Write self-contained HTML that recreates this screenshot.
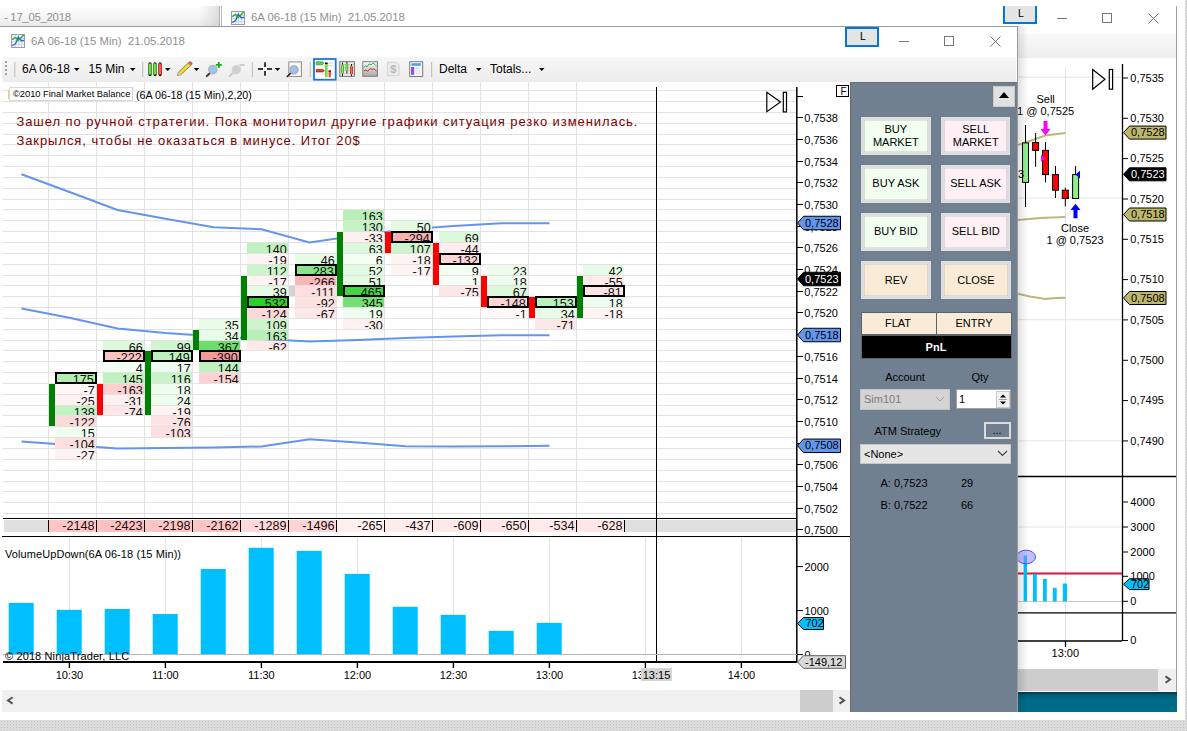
<!DOCTYPE html><html><head><meta charset="utf-8"><style>html,body{margin:0;padding:0;}body{width:1187px;height:731px;overflow:hidden;position:relative;background:#fff;font-family:"Liberation Sans", sans-serif;}div{box-sizing:border-box;}svg{position:absolute;left:0;top:0;overflow:visible;}.c{position:absolute;overflow:hidden;font-size:13px;line-height:13px;text-align:right;padding-right:2px;color:#111;box-sizing:border-box;}</style></head><body><div style="position:absolute;left:0.00px;top:720.00px;width:1187.00px;height:11.00px;background-color:#dedede;background-image:radial-gradient(#c2c2c2 0.7px,transparent 0.9px),radial-gradient(#cacaca 0.7px,transparent 0.9px);background-size:3px 3px,3px 3px;background-position:0 0,1.5px 1.5px;"></div><div style="position:absolute;left:1184.50px;top:0.00px;width:3.00px;height:731.00px;background-color:#dedede;background-image:radial-gradient(#c2c2c2 0.7px,transparent 0.9px),radial-gradient(#cacaca 0.7px,transparent 0.9px);background-size:3px 3px,3px 3px;background-position:0 0,1.5px 1.5px;"></div><div style="position:absolute;left:0.00px;top:6.00px;width:220.00px;height:21.00px;background:linear-gradient(to bottom,#ffffff 0%,#f4f4f4 60%,#e6e6e6 100%);"></div><div style="position:absolute;left:200.00px;top:6.00px;width:20.00px;height:21.00px;background:linear-gradient(to right,rgba(255,255,255,0),rgba(200,200,200,0.6));"></div><div style="position:absolute;left:219.00px;top:6.00px;width:1.00px;height:21.00px;background:#b0b0b0;"></div><div style="position:absolute;left:221.00px;top:6.00px;width:1.00px;height:21.00px;background:#b8b8b8;"></div><div style="position:absolute;left:0.00px;top:26.00px;width:1018.00px;height:1.00px;background:#a8a8a8;"></div><div style="position:absolute;left:4.00px;top:11.85px;font-size:11.4px;line-height:11.4px;color:#909090;white-space:nowrap;letter-spacing:-0.3px;">- 17_05_2018</div><svg style="left:231px;top:11px" width="14" height="14" viewBox="0 0 14 14"><rect x="0.5" y="0.5" width="13" height="13" fill="#f6f6fc" stroke="#9a9ab4"/><path d="M1 4.5H13M1 7.5H13M1 10.5H13M4.5 1V13M7.5 1V13M10.5 1V13" stroke="#d4d4e4" stroke-width="1"/><polyline points="1,11.5 3.5,10.5 5,9 6.3,5.5 7.3,3 9,5.5 10.5,6.8 12,6.3 13,6.3" fill="none" stroke="#1e64e0" stroke-width="1.3"/><polyline points="1,5.5 2.5,5 4,3.5 5,3.8 7,6.5 9,4.8 11,2.8 12.8,1" fill="none" stroke="#20b020" stroke-width="1.3"/></svg><div style="position:absolute;left:251.00px;top:11.85px;font-size:11.4px;line-height:11.4px;color:#909090;white-space:nowrap;">6A 06-18 (15 Min)&nbsp; 21.05.2018</div><div style="position:absolute;left:1003.00px;top:4.00px;width:34.00px;height:19.50px;background:#e5e5e5;border:2px solid #0078d7;"></div><div style="position:absolute;left:1021.00px;top:8.01px;font-size:10.5px;line-height:10.5px;color:#000;white-space:nowrap;transform:translateX(-50%);">L</div><div style="position:absolute;left:1057.00px;top:18.00px;width:10.00px;height:1.00px;background:#777;"></div><div style="position:absolute;left:1102.00px;top:13.00px;width:10.00px;height:10.00px;border:1px solid #777;"></div><svg style="left:1147.5px;top:13px" width="11" height="11" viewBox="0 0 11 11"><path d="M0.5 0.5L10.5 10.5M10.5 0.5L0.5 10.5" stroke="#777" stroke-width="1"/></svg><div style="position:absolute;left:1000.00px;top:0.00px;width:40.00px;height:6.00px;background:#fff;"></div><div style="position:absolute;left:1176.00px;top:6.00px;width:1.00px;height:706.00px;background:#a0a0a0;"></div><div style="position:absolute;left:1018.00px;top:34.00px;width:158.00px;height:24.00px;background:linear-gradient(to bottom,#f9f9f9,#eeeeee);"></div><div style="position:absolute;left:1018.00px;top:58.00px;width:158.00px;height:611.00px;background:#fff;"></div><div style="position:absolute;left:1018.00px;top:669.00px;width:140.00px;height:22.00px;background:#cdcdcd;"></div><div style="position:absolute;left:1158.00px;top:669.00px;width:18.00px;height:22.00px;background:#efefef;"></div><div style="position:absolute;left:1018.00px;top:691.50px;width:159.00px;height:20.50px;background:linear-gradient(to bottom,#003848 0px,#005c76 3px,#006a88 8px,#006d8b 100%);"></div><div style="position:absolute;left:0.00px;top:712.00px;width:1184.50px;height:8.00px;background:#fff;border-radius:0 0 6px 0;"></div><svg width="1187" height="731" viewBox="0 0 1187 731"><line x1="1018" y1="77.1" x2="1122" y2="77.1" stroke="#e3e3e3" stroke-width="1"/><line x1="1018" y1="198" x2="1122" y2="198" stroke="#e3e3e3" stroke-width="1"/><line x1="1018" y1="319.7" x2="1122" y2="319.7" stroke="#e3e3e3" stroke-width="1"/><line x1="1018" y1="440.9" x2="1122" y2="440.9" stroke="#e3e3e3" stroke-width="1"/><line x1="1065.5" y1="67" x2="1065.5" y2="641" stroke="#e3e3e3" stroke-width="1"/><line x1="1018" y1="527" x2="1122" y2="527" stroke="#e3e3e3" stroke-width="1"/><line x1="1018" y1="601.5" x2="1122" y2="601.5" stroke="#c8c8c8" stroke-width="1"/><line x1="1018" y1="476.5" x2="1176" y2="476.5" stroke="#000" stroke-width="1.3"/><line x1="1018" y1="612.8" x2="1176" y2="612.8" stroke="#000" stroke-width="1.3"/><line x1="1018" y1="641" x2="1122" y2="641" stroke="#000" stroke-width="1.3"/><line x1="1122.5" y1="64" x2="1122.5" y2="641" stroke="#000" stroke-width="1.3"/><line x1="1122.5" y1="78.0" x2="1128" y2="78.0" stroke="#000" stroke-width="1"/><line x1="1122.5" y1="118.3" x2="1128" y2="118.3" stroke="#000" stroke-width="1"/><line x1="1122.5" y1="158.6" x2="1128" y2="158.6" stroke="#000" stroke-width="1"/><line x1="1122.5" y1="199.0" x2="1128" y2="199.0" stroke="#000" stroke-width="1"/><line x1="1122.5" y1="239.3" x2="1128" y2="239.3" stroke="#000" stroke-width="1"/><line x1="1122.5" y1="279.6" x2="1128" y2="279.6" stroke="#000" stroke-width="1"/><line x1="1122.5" y1="319.9" x2="1128" y2="319.9" stroke="#000" stroke-width="1"/><line x1="1122.5" y1="360.3" x2="1128" y2="360.3" stroke="#000" stroke-width="1"/><line x1="1122.5" y1="400.6" x2="1128" y2="400.6" stroke="#000" stroke-width="1"/><line x1="1122.5" y1="440.9" x2="1128" y2="440.9" stroke="#000" stroke-width="1"/><line x1="1122.5" y1="502" x2="1128" y2="502" stroke="#000" stroke-width="1"/><line x1="1122.5" y1="527" x2="1128" y2="527" stroke="#000" stroke-width="1"/><line x1="1122.5" y1="552" x2="1128" y2="552" stroke="#000" stroke-width="1"/><line x1="1122.5" y1="576.3" x2="1128" y2="576.3" stroke="#000" stroke-width="1"/><line x1="1122.5" y1="601.3" x2="1128" y2="601.3" stroke="#000" stroke-width="1"/><line x1="1122.5" y1="640.5" x2="1128" y2="640.5" stroke="#000" stroke-width="1"/><line x1="1065.5" y1="641" x2="1065.5" y2="647" stroke="#000" stroke-width="1.3"/><polyline points="1018,145 1030,141 1045,135.6 1065.4,133" fill="none" stroke="#bdb77a" stroke-width="2"/><polyline points="1018,220 1040,218 1065.4,217" fill="none" stroke="#bdb77a" stroke-width="2"/><polyline points="1018,293.7 1030,296.5 1045.6,299 1055,298 1065.4,297.8" fill="none" stroke="#bdb77a" stroke-width="2"/><line x1="1025.5" y1="125" x2="1025.5" y2="207" stroke="#000" stroke-width="1"/><rect x="1022.5" y="142.9" width="6" height="39.5" fill="#90ee90" stroke="#000" stroke-width="1"/><line x1="1035.6" y1="133" x2="1035.6" y2="166.8" stroke="#000" stroke-width="1"/><rect x="1032.6" y="142.6" width="6" height="7.800000000000011" fill="#ff0000" stroke="#000" stroke-width="1"/><line x1="1045.5" y1="142" x2="1045.5" y2="182.4" stroke="#000" stroke-width="1"/><rect x="1042.5" y="150.4" width="6" height="24.19999999999999" fill="#ff0000" stroke="#000" stroke-width="1"/><line x1="1055.5" y1="166" x2="1055.5" y2="198" stroke="#000" stroke-width="1"/><rect x="1052.5" y="174.6" width="6" height="15.599999999999994" fill="#ff0000" stroke="#000" stroke-width="1"/><line x1="1065.3" y1="187.6" x2="1065.3" y2="206.3" stroke="#000" stroke-width="1"/><rect x="1062.3" y="190.2" width="6" height="8.300000000000011" fill="#ff0000" stroke="#000" stroke-width="1"/><line x1="1075.6" y1="166" x2="1075.6" y2="198.5" stroke="#000" stroke-width="1"/><rect x="1072.6" y="174.6" width="6" height="23.900000000000006" fill="#90ee90" stroke="#000" stroke-width="1"/><path d="M1043.5 121H1047.5V129H1050.5L1045.5 135.5L1040.5 129H1043.5Z" fill="#ff00ff"/><path d="M1041 155L1046 158.3L1041 161.6Z" fill="#ff00ff"/><path d="M1073.5 218.3H1077.5V210H1080.5L1075.5 203.7L1070.5 210H1073.5Z" fill="#0000ff"/><path d="M1080 170.7L1075.5 174.6L1080 178.5Z" fill="#0000ff"/><path d="M1092.7 69.5L1105 79.3L1092.7 89.2Z" fill="none" stroke="#000" stroke-width="1.2"/><rect x="1109.3" y="69.5" width="3.3" height="19.7" fill="none" stroke="#000" stroke-width="1.2"/><line x1="1018" y1="573.5" x2="1122" y2="573.5" stroke="#dc143c" stroke-width="2"/><rect x="1023.6" y="555.6" width="3.3999999999999773" height="45.69999999999993" fill="#00bfff"/><rect x="1033" y="574" width="3.7999999999999545" height="27.299999999999955" fill="#00bfff"/><rect x="1043" y="578.8" width="3.7999999999999545" height="22.5" fill="#00bfff"/><rect x="1052.8" y="587.8" width="3.900000000000091" height="13.5" fill="#00bfff"/><rect x="1062.8" y="583.5" width="4.2000000000000455" height="17.799999999999955" fill="#00bfff"/><ellipse cx="1026" cy="557" rx="9.5" ry="6.8" fill="rgba(140,140,255,0.55)" stroke="#5050ff" stroke-width="1"/><path d="M1123.5 132.6L1129.5 126.1H1166.0V139.1H1129.5Z" fill="#bdb76b" stroke="#000" stroke-width="1"/><path d="M1123.5 174.3L1129.5 167.8H1166.0V180.8H1129.5Z" fill="#000" stroke="#000" stroke-width="1"/><path d="M1123.5 214.5L1129.5 208.0H1166.0V221.0H1129.5Z" fill="#bdb76b" stroke="#000" stroke-width="1"/><path d="M1123.5 298L1129.5 291.5H1166.0V304.5H1129.5Z" fill="#bdb76b" stroke="#000" stroke-width="1"/><path d="M1123.5 584.2L1129.5 578.8000000000001H1149.0V589.6H1129.5Z" fill="#00bfff" stroke="#000" stroke-width="1"/></svg><div style="position:absolute;left:1130.30px;top:72.69px;font-size:11px;line-height:11px;color:#000;white-space:nowrap;">0,7535</div><div style="position:absolute;left:1130.30px;top:113.01px;font-size:11px;line-height:11px;color:#000;white-space:nowrap;">0,7530</div><div style="position:absolute;left:1130.30px;top:153.34px;font-size:11px;line-height:11px;color:#000;white-space:nowrap;">0,7525</div><div style="position:absolute;left:1130.30px;top:193.66px;font-size:11px;line-height:11px;color:#000;white-space:nowrap;">0,7520</div><div style="position:absolute;left:1130.30px;top:233.99px;font-size:11px;line-height:11px;color:#000;white-space:nowrap;">0,7515</div><div style="position:absolute;left:1130.30px;top:274.31px;font-size:11px;line-height:11px;color:#000;white-space:nowrap;">0,7510</div><div style="position:absolute;left:1130.30px;top:314.64px;font-size:11px;line-height:11px;color:#000;white-space:nowrap;">0,7505</div><div style="position:absolute;left:1130.30px;top:354.96px;font-size:11px;line-height:11px;color:#000;white-space:nowrap;">0,7500</div><div style="position:absolute;left:1130.30px;top:395.29px;font-size:11px;line-height:11px;color:#000;white-space:nowrap;">0,7495</div><div style="position:absolute;left:1130.30px;top:435.61px;font-size:11px;line-height:11px;color:#000;white-space:nowrap;">0,7490</div><div style="position:absolute;left:1130.30px;top:496.69px;font-size:11px;line-height:11px;color:#000;white-space:nowrap;">4000</div><div style="position:absolute;left:1130.30px;top:521.69px;font-size:11px;line-height:11px;color:#000;white-space:nowrap;">3000</div><div style="position:absolute;left:1130.30px;top:546.69px;font-size:11px;line-height:11px;color:#000;white-space:nowrap;">2000</div><div style="position:absolute;left:1130.30px;top:570.99px;font-size:11px;line-height:11px;color:#000;white-space:nowrap;">1000</div><div style="position:absolute;left:1130.30px;top:595.99px;font-size:11px;line-height:11px;color:#000;white-space:nowrap;">0</div><div style="position:absolute;left:1130.30px;top:635.19px;font-size:11px;line-height:11px;color:#000;white-space:nowrap;">0</div><div style="position:absolute;left:1131.00px;top:127.29px;font-size:11px;line-height:11px;color:#000;white-space:nowrap;">0,7528</div><div style="position:absolute;left:1131.00px;top:168.99px;font-size:11px;line-height:11px;color:#fff;white-space:nowrap;">0,7523</div><div style="position:absolute;left:1131.00px;top:209.19px;font-size:11px;line-height:11px;color:#000;white-space:nowrap;">0,7518</div><div style="position:absolute;left:1131.00px;top:292.69px;font-size:11px;line-height:11px;color:#000;white-space:nowrap;">0,7508</div><div style="position:absolute;left:1131.00px;top:578.89px;font-size:11px;line-height:11px;color:#000;white-space:nowrap;">702</div><div style="position:absolute;left:1065.30px;top:648.19px;font-size:11px;line-height:11px;color:#000;white-space:nowrap;transform:translateX(-50%);">13:00</div><div style="position:absolute;left:1045.60px;top:93.69px;font-size:11px;line-height:11px;color:#000;white-space:nowrap;transform:translateX(-50%);">Sell</div><div style="position:absolute;left:1045.60px;top:105.69px;font-size:11px;line-height:11px;color:#000;white-space:nowrap;transform:translateX(-50%);">1 @ 0,7525</div><div style="position:absolute;left:1075.00px;top:222.69px;font-size:11px;line-height:11px;color:#000;white-space:nowrap;transform:translateX(-50%);">Close</div><div style="position:absolute;left:1075.00px;top:234.69px;font-size:11px;line-height:11px;color:#000;white-space:nowrap;transform:translateX(-50%);">1 @ 0,7523</div><div style="position:absolute;left:1018.00px;top:169.19px;font-size:11px;line-height:11px;color:#000;white-space:nowrap;">3</div><div style="position:absolute;left:1018.00px;top:26.00px;width:10.00px;height:686.00px;background:linear-gradient(to right,rgba(0,0,0,0.12),rgba(0,0,0,0));"></div><div style="position:absolute;left:0.00px;top:26.00px;width:1018.00px;height:686.00px;background:#fff;"></div><div style="position:absolute;left:0.00px;top:26.00px;width:1018.00px;height:1.00px;background:#9a9a9a;"></div><div style="position:absolute;left:1017.00px;top:26.00px;width:1.00px;height:686.00px;background:#9a9a9a;"></div><svg style="left:11px;top:34px" width="14" height="14" viewBox="0 0 14 14"><rect x="0.5" y="0.5" width="13" height="13" fill="#f6f6fc" stroke="#9a9ab4"/><path d="M1 4.5H13M1 7.5H13M1 10.5H13M4.5 1V13M7.5 1V13M10.5 1V13" stroke="#d4d4e4" stroke-width="1"/><polyline points="1,11.5 3.5,10.5 5,9 6.3,5.5 7.3,3 9,5.5 10.5,6.8 12,6.3 13,6.3" fill="none" stroke="#1e64e0" stroke-width="1.3"/><polyline points="1,5.5 2.5,5 4,3.5 5,3.8 7,6.5 9,4.8 11,2.8 12.8,1" fill="none" stroke="#20b020" stroke-width="1.3"/></svg><div style="position:absolute;left:31.00px;top:35.85px;font-size:11.4px;line-height:11.4px;color:#909090;white-space:nowrap;">6A 06-18 (15 Min)&nbsp; 21.05.2018</div><div style="position:absolute;left:845.00px;top:27.40px;width:34.00px;height:19.50px;background:#e5e5e5;border:2px solid #0078d7;"></div><div style="position:absolute;left:863.00px;top:31.41px;font-size:10.5px;line-height:10.5px;color:#000;white-space:nowrap;transform:translateX(-50%);">L</div><div style="position:absolute;left:899.00px;top:41.00px;width:10.00px;height:1.00px;background:#777;"></div><div style="position:absolute;left:944.00px;top:36.00px;width:10.00px;height:10.00px;border:1px solid #777;"></div><svg style="left:990px;top:36px" width="11" height="11" viewBox="0 0 11 11"><path d="M0.5 0.5L10.5 10.5M10.5 0.5L0.5 10.5" stroke="#777" stroke-width="1"/></svg><div style="position:absolute;left:2.00px;top:56.50px;width:1014.00px;height:25.50px;background:linear-gradient(to bottom,#f7f7f7,#ececec);border-radius:4px 0 0 4px;"></div><svg width="1187" height="731" viewBox="0 0 1187 731"><rect x="5" y="61" width="2" height="2" fill="#a0a0a0"/><rect x="5" y="65" width="2" height="2" fill="#a0a0a0"/><rect x="5" y="69" width="2" height="2" fill="#a0a0a0"/><rect x="5" y="73.1" width="2" height="2" fill="#a0a0a0"/><line x1="14.8" y1="62" x2="14.8" y2="77" stroke="#c4c4c4" stroke-width="1.2"/><line x1="142.7" y1="62" x2="142.7" y2="77" stroke="#c4c4c4" stroke-width="1.2"/><line x1="252.4" y1="62" x2="252.4" y2="77" stroke="#c4c4c4" stroke-width="1.2"/><line x1="310.3" y1="62" x2="310.3" y2="77" stroke="#c4c4c4" stroke-width="1.2"/><line x1="431.6" y1="62" x2="431.6" y2="77" stroke="#c4c4c4" stroke-width="1.2"/><path d="M74 68H79.5L76.75 71Z" fill="#000"/><path d="M130 68H135.5L132.75 71Z" fill="#000"/><path d="M165 68H170.5L167.75 71Z" fill="#000"/><path d="M193.8 68H199.3L196.55 71Z" fill="#000"/><path d="M274.7 68H280.2L277.45 71Z" fill="#000"/><path d="M476 68H481.5L478.75 71Z" fill="#000"/><path d="M539 68H544.5L541.75 71Z" fill="#000"/><defs><linearGradient id="gG" x1="0" x2="1"><stop offset="0" stop-color="#2a9a10"/><stop offset="0.45" stop-color="#8cf060"/><stop offset="1" stop-color="#30a018"/></linearGradient><linearGradient id="gR" x1="0" x2="1"><stop offset="0" stop-color="#c01010"/><stop offset="0.45" stop-color="#ff7a6a"/><stop offset="1" stop-color="#c82010"/></linearGradient><linearGradient id="gL" x1="0" x2="0" y1="0" y2="1"><stop offset="0" stop-color="#fafafa"/><stop offset="1" stop-color="#a8a8a8"/></linearGradient></defs><rect x="148.4" y="62.2" width="3.2" height="14" rx="1.6" fill="#111"/><rect x="148.2" y="63.6" width="3.6" height="11" rx="1.2" fill="url(#gG)"/><rect x="153.4" y="62.2" width="3.2" height="14" rx="1.6" fill="#111"/><rect x="153.2" y="63.6" width="3.6" height="11" rx="1.2" fill="url(#gG)"/><rect x="158.5" y="62.2" width="3.2" height="14" rx="1.6" fill="#111"/><rect x="158.29999999999998" y="63.6" width="3.6" height="11" rx="1.2" fill="url(#gR)"/><path d="M177.2 75.6L178.3 72.3L188.3 62.9L190.9 65.4L180.8 74.7Z" fill="#f8d820" stroke="#707070" stroke-width="0.8"/><path d="M188.3 62.9L189.4 61.9Q190.4 61.2 191.3 62L191.9 62.6Q192.5 63.5 191.9 64.3L190.9 65.4Z" fill="#f05050" stroke="#808080" stroke-width="0.6"/><path d="M177.2 75.6L178.3 72.3L180.8 74.7Z" fill="#d8c0a0"/><line x1="206.8" y1="76.2" x2="210" y2="73" stroke="#303030" stroke-width="1.8" stroke-linecap="round"/><circle cx="212.8" cy="69.6" r="4.1" fill="#9cc4ec" stroke="#b4b4b4" stroke-width="1.4"/><path d="M215.8 64.9H221.8M218.8 61.9V67.9" stroke="#10b010" stroke-width="1.8"/><line x1="229.6" y1="76.2" x2="232.8" y2="73" stroke="#c8c8c8" stroke-width="1.8" stroke-linecap="round"/><circle cx="236.4" cy="69.6" r="4.3" fill="#cfcfcf" stroke="#d8d8d8" stroke-width="1"/><path d="M239.5 65H244.8" stroke="#c4c4c4" stroke-width="1.6"/><path d="M258 69H263M267 69H272M265 62.2V67.1M265 71V75.8" stroke="#000" stroke-width="1.5"/><rect x="288.8" y="61.9" width="12.6" height="14.5" fill="#f8f8f8" stroke="#8c8c8c" stroke-width="1"/><line x1="287.3" y1="76.5" x2="290.5" y2="73.3" stroke="#202020" stroke-width="1.6" stroke-linecap="round"/><circle cx="294" cy="69.8" r="4" fill="#9cc4ec" stroke="#a8a8a8" stroke-width="1.3"/><rect x="314" y="59" width="21.7" height="20.7" fill="#ffffff" stroke="#1e78d6" stroke-width="1.8"/><path d="M326 63.2H333M324 65.8H333M322 74H333" stroke="#d0d0d0" stroke-width="0.9"/><path d="M316.2 61.8H322.5L324.2 63.3L322.5 64.8H316.2Z" fill="#58d838" stroke="#2a7a1a" stroke-width="0.6"/><path d="M316.2 69.4H322.8L324.5 70.7L322.8 72H316.2Z" fill="#e83828" stroke="#8a1a10" stroke-width="0.6"/><rect x="325" y="63.2" width="2.6" height="14" fill="#68e048"/><rect x="325" y="62.5" width="2.6" height="1.6" fill="#111"/><rect x="328.6" y="71" width="2.3" height="6.2" fill="#f04838"/><rect x="328.6" y="70.3" width="2.3" height="1.4" fill="#111"/><rect x="339.8" y="61.7" width="14.6" height="14.6" fill="#f0f0f0" stroke="#707070" stroke-width="1"/><path d="M340 64.5H354M340 67.5H354M340 70.5H354M340 73.5H354" stroke="#b8b8b8" stroke-width="0.6"/><path d="M342.5 62.5V76M346.9 62V73.5M351.5 64V76" stroke="#111" stroke-width="1"/><rect x="341.1" y="64.5" width="2.9" height="9" rx="1" fill="url(#gG)"/><rect x="345.5" y="63.5" width="2.8" height="7.5" rx="1" fill="url(#gG)"/><rect x="350" y="66" width="3" height="8.5" rx="1" fill="url(#gR)"/><rect x="362.8" y="61.7" width="14.6" height="14.6" fill="url(#gL)" stroke="#7c7c7c" stroke-width="1"/><polyline points="364,67.5 365.5,65.5 367,67 369,63.8 371,64.8 373,63 375,64.5 376.5,66" fill="none" stroke="#20b040" stroke-width="0.9"/><polyline points="364,71 366,70 368,71.3 370,68.5 372,69.5 374,68.8 376.5,71" fill="none" stroke="#e02020" stroke-width="0.9"/><path d="M387.6 62.2H396.5L399 64.7V75.6H387.6Z" fill="#ececec" stroke="#d0d0d0" stroke-width="0.9"/><rect x="409.7" y="61.7" width="13" height="14.8" fill="#f6f8fc" stroke="#7a7a7a" stroke-width="1"/><rect x="411.3" y="63.2" width="9.6" height="2.6" fill="#5aa0e0"/><rect x="411.3" y="67.3" width="2.6" height="7.2" fill="#a050f0" stroke="#6a3090" stroke-width="0.5"/><path d="M415.5 68.3H421M415.5 70.8H421M415.5 73.3H421" stroke="#c8d0e0" stroke-width="1" stroke-dasharray="2 0.8"/></svg><div style="position:absolute;left:393.20px;top:64.19px;font-size:11px;line-height:11px;color:#b8b8b8;white-space:nowrap;transform:translateX(-50%);font-weight:bold;">$</div><div style="position:absolute;left:22.00px;top:62.84px;font-size:12px;line-height:12px;color:#000;white-space:nowrap;">6A 06-18</div><div style="position:absolute;left:88.50px;top:62.84px;font-size:12px;line-height:12px;color:#000;white-space:nowrap;">15 Min</div><div style="position:absolute;left:439.00px;top:62.84px;font-size:12px;line-height:12px;color:#000;white-space:nowrap;">Delta</div><div style="position:absolute;left:490.00px;top:62.84px;font-size:12px;line-height:12px;color:#000;white-space:nowrap;">Totals...</div><svg width="1187" height="731" viewBox="0 0 1187 731"><line x1="3" y1="90.50" x2="796.5" y2="90.50" stroke="#e2e2e2" stroke-width="1"/><line x1="3" y1="101.50" x2="796.5" y2="101.50" stroke="#e2e2e2" stroke-width="1"/><line x1="3" y1="112.50" x2="796.5" y2="112.50" stroke="#e2e2e2" stroke-width="1"/><line x1="3" y1="123.50" x2="796.5" y2="123.50" stroke="#e2e2e2" stroke-width="1"/><line x1="3" y1="134.50" x2="796.5" y2="134.50" stroke="#e2e2e2" stroke-width="1"/><line x1="3" y1="144.50" x2="796.5" y2="144.50" stroke="#e2e2e2" stroke-width="1"/><line x1="3" y1="155.50" x2="796.5" y2="155.50" stroke="#e2e2e2" stroke-width="1"/><line x1="3" y1="166.50" x2="796.5" y2="166.50" stroke="#e2e2e2" stroke-width="1"/><line x1="3" y1="177.50" x2="796.5" y2="177.50" stroke="#e2e2e2" stroke-width="1"/><line x1="3" y1="188.50" x2="796.5" y2="188.50" stroke="#e2e2e2" stroke-width="1"/><line x1="3" y1="199.50" x2="796.5" y2="199.50" stroke="#e2e2e2" stroke-width="1"/><line x1="3" y1="209.50" x2="796.5" y2="209.50" stroke="#e2e2e2" stroke-width="1"/><line x1="3" y1="220.50" x2="796.5" y2="220.50" stroke="#e2e2e2" stroke-width="1"/><line x1="3" y1="231.50" x2="796.5" y2="231.50" stroke="#e2e2e2" stroke-width="1"/><line x1="3" y1="242.50" x2="796.5" y2="242.50" stroke="#e2e2e2" stroke-width="1"/><line x1="3" y1="253.50" x2="796.5" y2="253.50" stroke="#e2e2e2" stroke-width="1"/><line x1="3" y1="264.50" x2="796.5" y2="264.50" stroke="#e2e2e2" stroke-width="1"/><line x1="3" y1="275.50" x2="796.5" y2="275.50" stroke="#e2e2e2" stroke-width="1"/><line x1="3" y1="285.50" x2="796.5" y2="285.50" stroke="#e2e2e2" stroke-width="1"/><line x1="3" y1="296.50" x2="796.5" y2="296.50" stroke="#e2e2e2" stroke-width="1"/><line x1="3" y1="307.50" x2="796.5" y2="307.50" stroke="#e2e2e2" stroke-width="1"/><line x1="3" y1="318.50" x2="796.5" y2="318.50" stroke="#e2e2e2" stroke-width="1"/><line x1="3" y1="329.50" x2="796.5" y2="329.50" stroke="#e2e2e2" stroke-width="1"/><line x1="3" y1="340.50" x2="796.5" y2="340.50" stroke="#e2e2e2" stroke-width="1"/><line x1="3" y1="350.50" x2="796.5" y2="350.50" stroke="#e2e2e2" stroke-width="1"/><line x1="3" y1="361.50" x2="796.5" y2="361.50" stroke="#e2e2e2" stroke-width="1"/><line x1="3" y1="372.50" x2="796.5" y2="372.50" stroke="#e2e2e2" stroke-width="1"/><line x1="3" y1="383.50" x2="796.5" y2="383.50" stroke="#e2e2e2" stroke-width="1"/><line x1="3" y1="394.50" x2="796.5" y2="394.50" stroke="#e2e2e2" stroke-width="1"/><line x1="3" y1="405.50" x2="796.5" y2="405.50" stroke="#e2e2e2" stroke-width="1"/><line x1="3" y1="415.50" x2="796.5" y2="415.50" stroke="#e2e2e2" stroke-width="1"/><line x1="3" y1="426.50" x2="796.5" y2="426.50" stroke="#e2e2e2" stroke-width="1"/><line x1="3" y1="437.50" x2="796.5" y2="437.50" stroke="#e2e2e2" stroke-width="1"/><line x1="3" y1="448.50" x2="796.5" y2="448.50" stroke="#e2e2e2" stroke-width="1"/><line x1="3" y1="459.50" x2="796.5" y2="459.50" stroke="#e2e2e2" stroke-width="1"/><line x1="3" y1="470.50" x2="796.5" y2="470.50" stroke="#e2e2e2" stroke-width="1"/><line x1="3" y1="481.50" x2="796.5" y2="481.50" stroke="#e2e2e2" stroke-width="1"/><line x1="3" y1="491.50" x2="796.5" y2="491.50" stroke="#e2e2e2" stroke-width="1"/><line x1="3" y1="502.50" x2="796.5" y2="502.50" stroke="#e2e2e2" stroke-width="1"/><line x1="3" y1="513.50" x2="796.5" y2="513.50" stroke="#e2e2e2" stroke-width="1"/><line x1="48.5" y1="82" x2="48.5" y2="518.5" stroke="#e2e2e2" stroke-width="1"/><line x1="96.5" y1="82" x2="96.5" y2="518.5" stroke="#e2e2e2" stroke-width="1"/><line x1="144.5" y1="82" x2="144.5" y2="518.5" stroke="#e2e2e2" stroke-width="1"/><line x1="192.5" y1="82" x2="192.5" y2="518.5" stroke="#e2e2e2" stroke-width="1"/><line x1="240.5" y1="82" x2="240.5" y2="518.5" stroke="#e2e2e2" stroke-width="1"/><line x1="288.5" y1="82" x2="288.5" y2="518.5" stroke="#e2e2e2" stroke-width="1"/><line x1="336.5" y1="82" x2="336.5" y2="518.5" stroke="#e2e2e2" stroke-width="1"/><line x1="384.5" y1="82" x2="384.5" y2="518.5" stroke="#e2e2e2" stroke-width="1"/><line x1="432.5" y1="82" x2="432.5" y2="518.5" stroke="#e2e2e2" stroke-width="1"/><line x1="480.5" y1="82" x2="480.5" y2="518.5" stroke="#e2e2e2" stroke-width="1"/><line x1="528.5" y1="82" x2="528.5" y2="518.5" stroke="#e2e2e2" stroke-width="1"/><line x1="576.5" y1="82" x2="576.5" y2="518.5" stroke="#e2e2e2" stroke-width="1"/><line x1="69.5" y1="537" x2="69.5" y2="654" stroke="#e2e2e2" stroke-width="1"/><line x1="165.5" y1="537" x2="165.5" y2="654" stroke="#e2e2e2" stroke-width="1"/><line x1="261.5" y1="537" x2="261.5" y2="654" stroke="#e2e2e2" stroke-width="1"/><line x1="357.5" y1="537" x2="357.5" y2="654" stroke="#e2e2e2" stroke-width="1"/><line x1="453.5" y1="537" x2="453.5" y2="654" stroke="#e2e2e2" stroke-width="1"/><line x1="549.5" y1="537" x2="549.5" y2="654" stroke="#e2e2e2" stroke-width="1"/><line x1="645.5" y1="537" x2="645.5" y2="654" stroke="#e2e2e2" stroke-width="1"/><line x1="741.5" y1="537" x2="741.5" y2="654" stroke="#e2e2e2" stroke-width="1"/><polyline points="21.5,174.2 69.5,192 117.5,210 165.5,218.7 213.5,227.3 261.5,229.3 309.5,242.5 357.5,235.5 405.5,229.5 453.5,226 501.5,223.3 549.5,223.3" fill="none" stroke="#6495ed" stroke-width="2"/><polyline points="21.5,308.6 69.5,317.7 117.5,328.5 165.5,333 213.5,336.3 261.5,339 309.5,341.5 357.5,340 405.5,338 453.5,336.5 501.5,335.2 549.5,335.2" fill="none" stroke="#6495ed" stroke-width="2"/><polyline points="21.5,441.5 69.5,445 117.5,448.5 165.5,448 213.5,447.5 261.5,446.5 309.5,439.2 357.5,442.5 405.5,446.3 453.5,446.5 501.5,446.3 549.5,445.8" fill="none" stroke="#6495ed" stroke-width="2"/></svg><div class="c" style="left:55.0px;top:373px;width:41px;height:10px;background:rgb(179,239,179);padding-top:0.6px;padding-right:2.3px;line-height:12px;font-size:12.6px">175</div><div class="c" style="left:55.0px;top:384px;width:41px;height:10px;background:rgb(255,246,246);padding-top:0.6px;padding-right:1.3px;line-height:12px;font-size:12.6px">-7</div><div class="c" style="left:55.0px;top:395px;width:41px;height:10px;background:rgb(254,242,242);padding-top:0.6px;padding-right:1.3px;line-height:12px;font-size:12.6px">-25</div><div class="c" style="left:55.0px;top:406px;width:41px;height:9px;background:rgb(193,242,193);padding-top:0.6px;padding-right:1.3px;line-height:12px;font-size:12.6px">138</div><div class="c" style="left:55.0px;top:416px;width:41px;height:10px;background:rgb(252,218,218);padding-top:0.6px;padding-right:1.3px;line-height:12px;font-size:12.6px">-122</div><div class="c" style="left:55.0px;top:427px;width:41px;height:10px;background:rgb(239,254,239);padding-top:0.6px;padding-right:1.3px;line-height:12px;font-size:12.6px">15</div><div class="c" style="left:55.0px;top:438px;width:41px;height:10px;background:rgb(253,222,222);padding-top:0.6px;padding-right:1.3px;line-height:12px;font-size:12.6px">-104</div><div class="c" style="left:55.0px;top:449px;width:41px;height:10px;background:rgb(254,241,241);padding-top:0.6px;padding-right:1.3px;line-height:12px;font-size:12.6px">-27</div><div style="position:absolute;left:49.00px;top:384.00px;width:6.00px;height:42.00px;background:#008000;"></div><div class="c" style="left:103.0px;top:341px;width:41px;height:9px;background:rgb(220,249,220);padding-top:0.6px;padding-right:1.3px;line-height:12px;font-size:12.6px">66</div><div class="c" style="left:103.0px;top:351px;width:41px;height:10px;background:rgb(250,193,193);padding-top:0.6px;padding-right:2.3px;line-height:12px;font-size:12.6px">-222</div><div class="c" style="left:103.0px;top:362px;width:41px;height:10px;background:rgb(243,255,243);padding-top:0.6px;padding-right:1.3px;line-height:12px;font-size:12.6px">4</div><div class="c" style="left:103.0px;top:373px;width:41px;height:10px;background:rgb(190,242,190);padding-top:0.6px;padding-right:1.3px;line-height:12px;font-size:12.6px">145</div><div class="c" style="left:103.0px;top:384px;width:41px;height:10px;background:rgb(252,208,208);padding-top:0.6px;padding-right:1.3px;line-height:12px;font-size:12.6px">-163</div><div class="c" style="left:103.0px;top:395px;width:41px;height:10px;background:rgb(254,240,240);padding-top:0.6px;padding-right:1.3px;line-height:12px;font-size:12.6px">-31</div><div class="c" style="left:103.0px;top:406px;width:41px;height:9px;background:rgb(253,230,230);padding-top:0.6px;padding-right:1.3px;line-height:12px;font-size:12.6px">-74</div><div style="position:absolute;left:97.00px;top:384.00px;width:6.00px;height:31.00px;background:#ff0000;"></div><div class="c" style="left:151.0px;top:341px;width:41px;height:9px;background:rgb(208,246,208);padding-top:0.6px;padding-right:1.3px;line-height:12px;font-size:12.6px">99</div><div class="c" style="left:151.0px;top:351px;width:41px;height:10px;background:rgb(189,241,189);padding-top:0.6px;padding-right:2.3px;line-height:12px;font-size:12.6px">149</div><div class="c" style="left:151.0px;top:362px;width:41px;height:10px;background:rgb(239,253,239);padding-top:0.6px;padding-right:1.3px;line-height:12px;font-size:12.6px">17</div><div class="c" style="left:151.0px;top:373px;width:41px;height:10px;background:rgb(201,244,201);padding-top:0.6px;padding-right:1.3px;line-height:12px;font-size:12.6px">116</div><div class="c" style="left:151.0px;top:384px;width:41px;height:10px;background:rgb(238,253,238);padding-top:0.6px;padding-right:1.3px;line-height:12px;font-size:12.6px">18</div><div class="c" style="left:151.0px;top:395px;width:41px;height:10px;background:rgb(236,253,236);padding-top:0.6px;padding-right:1.3px;line-height:12px;font-size:12.6px">24</div><div class="c" style="left:151.0px;top:406px;width:41px;height:9px;background:rgb(255,243,243);padding-top:0.6px;padding-right:1.3px;line-height:12px;font-size:12.6px">-19</div><div class="c" style="left:151.0px;top:416px;width:41px;height:10px;background:rgb(253,229,229);padding-top:0.6px;padding-right:1.3px;line-height:12px;font-size:12.6px">-76</div><div class="c" style="left:151.0px;top:427px;width:41px;height:10px;background:rgb(253,223,223);padding-top:0.6px;padding-right:1.3px;line-height:12px;font-size:12.6px">-103</div><div style="position:absolute;left:145.00px;top:351.00px;width:6.00px;height:64.00px;background:#008000;"></div><div class="c" style="left:199.0px;top:319px;width:41px;height:10px;background:rgb(232,252,232);padding-top:0.6px;padding-right:1.3px;line-height:12px;font-size:12.6px">35</div><div class="c" style="left:199.0px;top:330px;width:41px;height:10px;background:rgb(232,252,232);padding-top:0.6px;padding-right:1.3px;line-height:12px;font-size:12.6px">34</div><div class="c" style="left:199.0px;top:341px;width:41px;height:9px;background:rgb(107,222,107);padding-top:0.6px;padding-right:1.3px;line-height:12px;font-size:12.6px">367</div><div class="c" style="left:199.0px;top:351px;width:41px;height:10px;background:rgb(247,152,152);padding-top:0.6px;padding-right:2.3px;line-height:12px;font-size:12.6px">-390</div><div class="c" style="left:199.0px;top:362px;width:41px;height:10px;background:rgb(191,242,191);padding-top:0.6px;padding-right:1.3px;line-height:12px;font-size:12.6px">144</div><div class="c" style="left:199.0px;top:373px;width:41px;height:10px;background:rgb(252,210,210);padding-top:0.6px;padding-right:1.3px;line-height:12px;font-size:12.6px">-154</div><div style="position:absolute;left:193.00px;top:330.00px;width:6.00px;height:20.00px;background:#008000;"></div><div class="c" style="left:247.0px;top:243px;width:41px;height:10px;background:rgb(192,242,192);padding-top:0.6px;padding-right:1.3px;line-height:12px;font-size:12.6px">140</div><div class="c" style="left:247.0px;top:254px;width:41px;height:10px;background:rgb(255,243,243);padding-top:0.6px;padding-right:1.3px;line-height:12px;font-size:12.6px">-19</div><div class="c" style="left:247.0px;top:265px;width:41px;height:10px;background:rgb(203,245,203);padding-top:0.6px;padding-right:1.3px;line-height:12px;font-size:12.6px">112</div><div class="c" style="left:247.0px;top:276px;width:41px;height:9px;background:rgb(255,244,244);padding-top:0.6px;padding-right:1.3px;line-height:12px;font-size:12.6px">-17</div><div class="c" style="left:247.0px;top:286px;width:41px;height:10px;background:rgb(230,251,230);padding-top:0.6px;padding-right:1.3px;line-height:12px;font-size:12.6px">39</div><div class="c" style="left:247.0px;top:297px;width:41px;height:10px;background:rgb(45,207,45);padding-top:0.6px;padding-right:2.3px;line-height:12px;font-size:12.6px">532</div><div class="c" style="left:247.0px;top:308px;width:41px;height:10px;background:rgb(252,217,217);padding-top:0.6px;padding-right:1.3px;line-height:12px;font-size:12.6px">-124</div><div class="c" style="left:247.0px;top:319px;width:41px;height:10px;background:rgb(204,245,204);padding-top:0.6px;padding-right:1.3px;line-height:12px;font-size:12.6px">109</div><div class="c" style="left:247.0px;top:330px;width:41px;height:10px;background:rgb(184,240,184);padding-top:0.6px;padding-right:1.3px;line-height:12px;font-size:12.6px">163</div><div class="c" style="left:247.0px;top:341px;width:41px;height:9px;background:rgb(254,233,233);padding-top:0.6px;padding-right:1.3px;line-height:12px;font-size:12.6px">-62</div><div style="position:absolute;left:241.00px;top:276.00px;width:6.00px;height:64.00px;background:#008000;"></div><div class="c" style="left:295.0px;top:254px;width:41px;height:10px;background:rgb(228,251,228);padding-top:0.6px;padding-right:1.3px;line-height:12px;font-size:12.6px">46</div><div class="c" style="left:295.0px;top:265px;width:41px;height:10px;background:rgb(138,229,138);padding-top:0.6px;padding-right:2.3px;line-height:12px;font-size:12.6px">283</div><div class="c" style="left:295.0px;top:276px;width:41px;height:9px;background:rgb(249,182,182);padding-top:0.6px;padding-right:1.3px;line-height:12px;font-size:12.6px">-266</div><div class="c" style="left:295.0px;top:286px;width:41px;height:10px;background:rgb(253,221,221);padding-top:0.6px;padding-right:1.3px;line-height:12px;font-size:12.6px">-111</div><div class="c" style="left:295.0px;top:297px;width:41px;height:10px;background:rgb(253,225,225);padding-top:0.6px;padding-right:1.3px;line-height:12px;font-size:12.6px">-92</div><div class="c" style="left:295.0px;top:308px;width:41px;height:10px;background:rgb(254,231,231);padding-top:0.6px;padding-right:1.3px;line-height:12px;font-size:12.6px">-67</div><div style="position:absolute;left:289.00px;top:286.00px;width:6.00px;height:10.00px;background:#d3d3d3;"></div><div class="c" style="left:343.0px;top:210px;width:41px;height:10px;background:rgb(184,240,184);padding-top:0.6px;padding-right:1.3px;line-height:12px;font-size:12.6px">163</div><div class="c" style="left:343.0px;top:221px;width:41px;height:10px;background:rgb(196,243,196);padding-top:0.6px;padding-right:1.3px;line-height:12px;font-size:12.6px">130</div><div class="c" style="left:343.0px;top:232px;width:41px;height:10px;background:rgb(254,240,240);padding-top:0.6px;padding-right:1.3px;line-height:12px;font-size:12.6px">-33</div><div class="c" style="left:343.0px;top:243px;width:41px;height:10px;background:rgb(221,249,221);padding-top:0.6px;padding-right:1.3px;line-height:12px;font-size:12.6px">63</div><div class="c" style="left:343.0px;top:254px;width:41px;height:10px;background:rgb(243,254,243);padding-top:0.6px;padding-right:1.3px;line-height:12px;font-size:12.6px">6</div><div class="c" style="left:343.0px;top:265px;width:41px;height:10px;background:rgb(225,250,225);padding-top:0.6px;padding-right:1.3px;line-height:12px;font-size:12.6px">52</div><div class="c" style="left:343.0px;top:276px;width:41px;height:9px;background:rgb(226,250,226);padding-top:0.6px;padding-right:1.3px;line-height:12px;font-size:12.6px">51</div><div class="c" style="left:343.0px;top:286px;width:41px;height:10px;background:rgb(70,213,70);padding-top:0.6px;padding-right:2.3px;line-height:12px;font-size:12.6px">465</div><div class="c" style="left:343.0px;top:297px;width:41px;height:10px;background:rgb(115,224,115);padding-top:0.6px;padding-right:1.3px;line-height:12px;font-size:12.6px">345</div><div class="c" style="left:343.0px;top:308px;width:41px;height:10px;background:rgb(238,253,238);padding-top:0.6px;padding-right:1.3px;line-height:12px;font-size:12.6px">19</div><div class="c" style="left:343.0px;top:319px;width:41px;height:10px;background:rgb(254,241,241);padding-top:0.6px;padding-right:1.3px;line-height:12px;font-size:12.6px">-30</div><div style="position:absolute;left:337.00px;top:232.00px;width:6.00px;height:64.00px;background:#008000;"></div><div class="c" style="left:391.0px;top:221px;width:41px;height:10px;background:rgb(226,250,226);padding-top:0.6px;padding-right:1.3px;line-height:12px;font-size:12.6px">50</div><div class="c" style="left:391.0px;top:232px;width:41px;height:10px;background:rgb(249,176,176);padding-top:0.6px;padding-right:2.3px;line-height:12px;font-size:12.6px">-294</div><div class="c" style="left:391.0px;top:243px;width:41px;height:10px;background:rgb(205,245,205);padding-top:0.6px;padding-right:1.3px;line-height:12px;font-size:12.6px">107</div><div class="c" style="left:391.0px;top:254px;width:41px;height:10px;background:rgb(255,244,244);padding-top:0.6px;padding-right:1.3px;line-height:12px;font-size:12.6px">-18</div><div class="c" style="left:391.0px;top:265px;width:41px;height:10px;background:rgb(255,244,244);padding-top:0.6px;padding-right:1.3px;line-height:12px;font-size:12.6px">-17</div><div style="position:absolute;left:385.00px;top:232.00px;width:6.00px;height:21.00px;background:#ff0000;"></div><div class="c" style="left:439.0px;top:232px;width:41px;height:10px;background:rgb(219,249,219);padding-top:0.6px;padding-right:1.3px;line-height:12px;font-size:12.6px">69</div><div class="c" style="left:439.0px;top:243px;width:41px;height:10px;background:rgb(254,237,237);padding-top:0.6px;padding-right:1.3px;line-height:12px;font-size:12.6px">-44</div><div class="c" style="left:439.0px;top:254px;width:41px;height:10px;background:rgb(252,215,215);padding-top:0.6px;padding-right:2.3px;line-height:12px;font-size:12.6px">-132</div><div class="c" style="left:439.0px;top:265px;width:41px;height:10px;background:rgb(242,254,242);padding-top:0.6px;padding-right:1.3px;line-height:12px;font-size:12.6px">9</div><div class="c" style="left:439.0px;top:276px;width:41px;height:9px;background:rgb(245,255,245);padding-top:0.6px;padding-right:1.3px;line-height:12px;font-size:12.6px">1</div><div class="c" style="left:439.0px;top:286px;width:41px;height:10px;background:rgb(253,230,230);padding-top:0.6px;padding-right:1.3px;line-height:12px;font-size:12.6px">-75</div><div style="position:absolute;left:433.00px;top:243.00px;width:6.00px;height:42.00px;background:#ff0000;"></div><div class="c" style="left:487.0px;top:265px;width:41px;height:10px;background:rgb(236,253,236);padding-top:0.6px;padding-right:1.3px;line-height:12px;font-size:12.6px">23</div><div class="c" style="left:487.0px;top:276px;width:41px;height:9px;background:rgb(238,253,238);padding-top:0.6px;padding-right:1.3px;line-height:12px;font-size:12.6px">18</div><div class="c" style="left:487.0px;top:286px;width:41px;height:10px;background:rgb(220,249,220);padding-top:0.6px;padding-right:1.3px;line-height:12px;font-size:12.6px">67</div><div class="c" style="left:487.0px;top:297px;width:41px;height:10px;background:rgb(252,212,212);padding-top:0.6px;padding-right:2.3px;line-height:12px;font-size:12.6px">-148</div><div class="c" style="left:487.0px;top:308px;width:41px;height:10px;background:rgb(255,248,248);padding-top:0.6px;padding-right:1.3px;line-height:12px;font-size:12.6px">-1</div><div style="position:absolute;left:481.00px;top:276.00px;width:6.00px;height:31.00px;background:#ff0000;"></div><div class="c" style="left:535.0px;top:297px;width:41px;height:10px;background:rgb(187,241,187);padding-top:0.6px;padding-right:2.3px;line-height:12px;font-size:12.6px">153</div><div class="c" style="left:535.0px;top:308px;width:41px;height:10px;background:rgb(232,252,232);padding-top:0.6px;padding-right:1.3px;line-height:12px;font-size:12.6px">34</div><div class="c" style="left:535.0px;top:319px;width:41px;height:10px;background:rgb(253,231,231);padding-top:0.6px;padding-right:1.3px;line-height:12px;font-size:12.6px">-71</div><div style="position:absolute;left:529.00px;top:297.00px;width:6.00px;height:21.00px;background:#ff0000;"></div><div class="c" style="left:583.0px;top:265px;width:41px;height:10px;background:rgb(229,251,229);padding-top:0.6px;padding-right:1.3px;line-height:12px;font-size:12.6px">42</div><div class="c" style="left:583.0px;top:276px;width:41px;height:9px;background:rgb(254,234,234);padding-top:0.6px;padding-right:1.3px;line-height:12px;font-size:12.6px">-55</div><div class="c" style="left:583.0px;top:286px;width:41px;height:10px;background:rgb(253,228,228);padding-top:0.6px;padding-right:2.3px;line-height:12px;font-size:12.6px">-81</div><div class="c" style="left:583.0px;top:297px;width:41px;height:10px;background:rgb(238,253,238);padding-top:0.6px;padding-right:1.3px;line-height:12px;font-size:12.6px">18</div><div class="c" style="left:583.0px;top:308px;width:41px;height:10px;background:rgb(255,244,244);padding-top:0.6px;padding-right:1.3px;line-height:12px;font-size:12.6px">-18</div><div style="position:absolute;left:577.00px;top:276.00px;width:6.00px;height:42.00px;background:#008000;"></div><div style="position:absolute;left:55.00px;top:372.00px;width:42.00px;height:12.00px;border:2px solid #000;"></div><div style="position:absolute;left:103.00px;top:350.00px;width:42.00px;height:12.00px;border:2px solid #000;"></div><div style="position:absolute;left:151.00px;top:350.00px;width:42.00px;height:12.00px;border:2px solid #000;"></div><div style="position:absolute;left:199.00px;top:350.00px;width:42.00px;height:12.00px;border:2px solid #000;"></div><div style="position:absolute;left:247.00px;top:296.00px;width:42.00px;height:12.00px;border:2px solid #000;"></div><div style="position:absolute;left:295.00px;top:264.00px;width:42.00px;height:12.00px;border:2px solid #000;"></div><div style="position:absolute;left:343.00px;top:285.00px;width:42.00px;height:12.00px;border:2px solid #000;"></div><div style="position:absolute;left:391.00px;top:231.00px;width:42.00px;height:12.00px;border:2px solid #000;"></div><div style="position:absolute;left:439.00px;top:253.00px;width:42.00px;height:12.00px;border:2px solid #000;"></div><div style="position:absolute;left:487.00px;top:296.00px;width:42.00px;height:12.00px;border:2px solid #000;"></div><div style="position:absolute;left:535.00px;top:296.00px;width:42.00px;height:12.00px;border:2px solid #000;"></div><div style="position:absolute;left:583.00px;top:285.00px;width:42.00px;height:12.00px;border:2px solid #000;"></div><div style="position:absolute;left:3.00px;top:518.00px;width:794.00px;height:1.30px;background:#000;"></div><div style="position:absolute;left:4.00px;top:519.50px;width:44.60px;height:12.50px;background:#e0e0e0;"></div><div style="position:absolute;left:625.00px;top:519.50px;width:171.50px;height:12.50px;background:#e0e0e0;"></div><div class="c" style="left:48.0px;top:519.5px;width:48px;height:12.5px;background:rgb(255,198,198);padding-right:1.6px;padding-top:0px;line-height:12px;font-size:12.6px;">-2148</div><div class="c" style="left:96.0px;top:519.5px;width:48px;height:12.5px;background:rgb(255,192,192);padding-right:1.6px;padding-top:0px;line-height:12px;font-size:12.6px;">-2423</div><div class="c" style="left:144.0px;top:519.5px;width:48px;height:12.5px;background:rgb(255,197,197);padding-right:1.6px;padding-top:0px;line-height:12px;font-size:12.6px;">-2198</div><div class="c" style="left:192.0px;top:519.5px;width:48px;height:12.5px;background:rgb(255,197,197);padding-right:1.6px;padding-top:0px;line-height:12px;font-size:12.6px;">-2162</div><div class="c" style="left:240.0px;top:519.5px;width:48px;height:12.5px;background:rgb(255,217,217);padding-right:1.6px;padding-top:0px;line-height:12px;font-size:12.6px;">-1289</div><div class="c" style="left:288.0px;top:519.5px;width:48px;height:12.5px;background:rgb(255,212,212);padding-right:1.6px;padding-top:0px;line-height:12px;font-size:12.6px;">-1496</div><div class="c" style="left:336.0px;top:519.5px;width:48px;height:12.5px;background:rgb(255,239,239);padding-right:1.6px;padding-top:0px;line-height:12px;font-size:12.6px;">-265</div><div class="c" style="left:384.0px;top:519.5px;width:48px;height:12.5px;background:rgb(255,235,235);padding-right:1.6px;padding-top:0px;line-height:12px;font-size:12.6px;">-437</div><div class="c" style="left:432.0px;top:519.5px;width:48px;height:12.5px;background:rgb(255,232,232);padding-right:1.6px;padding-top:0px;line-height:12px;font-size:12.6px;">-609</div><div class="c" style="left:480.0px;top:519.5px;width:48px;height:12.5px;background:rgb(255,231,231);padding-right:1.6px;padding-top:0px;line-height:12px;font-size:12.6px;">-650</div><div class="c" style="left:528.0px;top:519.5px;width:48px;height:12.5px;background:rgb(255,233,233);padding-right:1.6px;padding-top:0px;line-height:12px;font-size:12.6px;">-534</div><div class="c" style="left:576.0px;top:519.5px;width:48px;height:12.5px;background:rgb(255,231,231);padding-right:1.6px;padding-top:0px;line-height:12px;font-size:12.6px;">-628</div><div style="position:absolute;left:47.90px;top:519.50px;width:1.50px;height:12.50px;background:#000;"></div><div style="position:absolute;left:95.90px;top:519.50px;width:1.50px;height:12.50px;background:#000;"></div><div style="position:absolute;left:143.90px;top:519.50px;width:1.50px;height:12.50px;background:#000;"></div><div style="position:absolute;left:191.90px;top:519.50px;width:1.50px;height:12.50px;background:#000;"></div><div style="position:absolute;left:239.90px;top:519.50px;width:1.50px;height:12.50px;background:#000;"></div><div style="position:absolute;left:287.90px;top:519.50px;width:1.50px;height:12.50px;background:#000;"></div><div style="position:absolute;left:335.90px;top:519.50px;width:1.50px;height:12.50px;background:#000;"></div><div style="position:absolute;left:383.90px;top:519.50px;width:1.50px;height:12.50px;background:#000;"></div><div style="position:absolute;left:431.90px;top:519.50px;width:1.50px;height:12.50px;background:#000;"></div><div style="position:absolute;left:479.90px;top:519.50px;width:1.50px;height:12.50px;background:#000;"></div><div style="position:absolute;left:527.90px;top:519.50px;width:1.50px;height:12.50px;background:#000;"></div><div style="position:absolute;left:575.90px;top:519.50px;width:1.50px;height:12.50px;background:#000;"></div><div style="position:absolute;left:623.90px;top:519.50px;width:1.50px;height:12.50px;background:#000;"></div><div style="position:absolute;left:2.00px;top:535.50px;width:848.00px;height:1.40px;background:#000;"></div><div style="position:absolute;left:655.60px;top:87.00px;width:1.50px;height:575.00px;background:#000;"></div><svg width="1187" height="731" viewBox="0 0 1187 731"><line x1="796.8" y1="87" x2="796.8" y2="662.5" stroke="#000" stroke-width="1.5"/><line x1="796.8" y1="96.5" x2="803" y2="96.5" stroke="#000" stroke-width="1"/><line x1="796.8" y1="117.5" x2="803" y2="117.5" stroke="#000" stroke-width="1"/><line x1="796.8" y1="139.5" x2="803" y2="139.5" stroke="#000" stroke-width="1"/><line x1="796.8" y1="161.5" x2="803" y2="161.5" stroke="#000" stroke-width="1"/><line x1="796.8" y1="182.5" x2="803" y2="182.5" stroke="#000" stroke-width="1"/><line x1="796.8" y1="204.5" x2="803" y2="204.5" stroke="#000" stroke-width="1"/><line x1="796.8" y1="226.5" x2="803" y2="226.5" stroke="#000" stroke-width="1"/><line x1="796.8" y1="247.5" x2="803" y2="247.5" stroke="#000" stroke-width="1"/><line x1="796.8" y1="269.5" x2="803" y2="269.5" stroke="#000" stroke-width="1"/><line x1="796.8" y1="291.5" x2="803" y2="291.5" stroke="#000" stroke-width="1"/><line x1="796.8" y1="312.5" x2="803" y2="312.5" stroke="#000" stroke-width="1"/><line x1="796.8" y1="334.5" x2="803" y2="334.5" stroke="#000" stroke-width="1"/><line x1="796.8" y1="356.5" x2="803" y2="356.5" stroke="#000" stroke-width="1"/><line x1="796.8" y1="378.5" x2="803" y2="378.5" stroke="#000" stroke-width="1"/><line x1="796.8" y1="399.5" x2="803" y2="399.5" stroke="#000" stroke-width="1"/><line x1="796.8" y1="421.5" x2="803" y2="421.5" stroke="#000" stroke-width="1"/><line x1="796.8" y1="443.5" x2="803" y2="443.5" stroke="#000" stroke-width="1"/><line x1="796.8" y1="464.5" x2="803" y2="464.5" stroke="#000" stroke-width="1"/><line x1="796.8" y1="486.5" x2="803" y2="486.5" stroke="#000" stroke-width="1"/><line x1="796.8" y1="508.5" x2="803" y2="508.5" stroke="#000" stroke-width="1"/><line x1="796.8" y1="529.5" x2="803" y2="529.5" stroke="#000" stroke-width="1"/><path d="M766.8 92.3L780.5 102L766.8 111.7Z" fill="none" stroke="#000" stroke-width="1.2"/><rect x="783.3" y="92.3" width="3.2" height="19.6" fill="none" stroke="#000" stroke-width="1.2"/><rect x="836.5" y="85.5" width="12" height="11" fill="#fff" stroke="#000" stroke-width="1"/><line x1="796.8" y1="566.6" x2="803" y2="566.6" stroke="#000" stroke-width="1"/><line x1="796.8" y1="610.6" x2="803" y2="610.6" stroke="#000" stroke-width="1"/><line x1="796.8" y1="654.6" x2="803" y2="654.6" stroke="#000" stroke-width="1"/></svg><div style="position:absolute;left:804.30px;top:112.69px;font-size:11px;line-height:11px;color:#000;white-space:nowrap;">0,7538</div><div style="position:absolute;left:804.30px;top:134.69px;font-size:11px;line-height:11px;color:#000;white-space:nowrap;">0,7536</div><div style="position:absolute;left:804.30px;top:156.69px;font-size:11px;line-height:11px;color:#000;white-space:nowrap;">0,7534</div><div style="position:absolute;left:804.30px;top:177.69px;font-size:11px;line-height:11px;color:#000;white-space:nowrap;">0,7532</div><div style="position:absolute;left:804.30px;top:199.69px;font-size:11px;line-height:11px;color:#000;white-space:nowrap;">0,7530</div><div style="position:absolute;left:804.30px;top:221.69px;font-size:11px;line-height:11px;color:#000;white-space:nowrap;">0,7528</div><div style="position:absolute;left:804.30px;top:242.69px;font-size:11px;line-height:11px;color:#000;white-space:nowrap;">0,7526</div><div style="position:absolute;left:804.30px;top:264.69px;font-size:11px;line-height:11px;color:#000;white-space:nowrap;">0,7524</div><div style="position:absolute;left:804.30px;top:286.69px;font-size:11px;line-height:11px;color:#000;white-space:nowrap;">0,7522</div><div style="position:absolute;left:804.30px;top:307.69px;font-size:11px;line-height:11px;color:#000;white-space:nowrap;">0,7520</div><div style="position:absolute;left:804.30px;top:329.69px;font-size:11px;line-height:11px;color:#000;white-space:nowrap;">0,7518</div><div style="position:absolute;left:804.30px;top:351.69px;font-size:11px;line-height:11px;color:#000;white-space:nowrap;">0,7516</div><div style="position:absolute;left:804.30px;top:373.69px;font-size:11px;line-height:11px;color:#000;white-space:nowrap;">0,7514</div><div style="position:absolute;left:804.30px;top:394.69px;font-size:11px;line-height:11px;color:#000;white-space:nowrap;">0,7512</div><div style="position:absolute;left:804.30px;top:416.69px;font-size:11px;line-height:11px;color:#000;white-space:nowrap;">0,7510</div><div style="position:absolute;left:804.30px;top:438.69px;font-size:11px;line-height:11px;color:#000;white-space:nowrap;">0,7508</div><div style="position:absolute;left:804.30px;top:459.69px;font-size:11px;line-height:11px;color:#000;white-space:nowrap;">0,7506</div><div style="position:absolute;left:804.30px;top:481.69px;font-size:11px;line-height:11px;color:#000;white-space:nowrap;">0,7504</div><div style="position:absolute;left:804.30px;top:503.69px;font-size:11px;line-height:11px;color:#000;white-space:nowrap;">0,7502</div><div style="position:absolute;left:804.30px;top:524.69px;font-size:11px;line-height:11px;color:#000;white-space:nowrap;">0,7500</div><div style="position:absolute;left:804.50px;top:561.69px;font-size:11px;line-height:11px;color:#000;white-space:nowrap;">2000</div><div style="position:absolute;left:804.50px;top:605.69px;font-size:11px;line-height:11px;color:#000;white-space:nowrap;">1000</div><div style="position:absolute;left:804.50px;top:649.69px;font-size:11px;line-height:11px;color:#000;white-space:nowrap;">0</div><svg width="1187" height="731" viewBox="0 0 1187 731"><path d="M797.5 223L803.5 216.25H840.5V229.75H803.5Z" fill="#6495ed" stroke="#000" stroke-width="1"/><path d="M797.5 279L803.5 272.25H840.5V285.75H803.5Z" fill="#000" stroke="#000" stroke-width="1"/><path d="M797.5 335L803.5 328.25H840.5V341.75H803.5Z" fill="#6495ed" stroke="#000" stroke-width="1"/><path d="M797.5 445.8L803.5 439.05H840.5V452.55H803.5Z" fill="#6495ed" stroke="#000" stroke-width="1"/><path d="M797.5 623.5L803.5 617.5H823.5V629.5H803.5Z" fill="#00bfff" stroke="#000" stroke-width="1"/><path d="M797.5 662L803.5 655.7H845.5V668.3H803.5Z" fill="#d8d8d8" stroke="#606060" stroke-width="1"/></svg><div style="position:absolute;left:837.50px;top:86.53px;font-size:10px;line-height:10px;color:#000;white-space:nowrap;width:12px;text-align:center;">F</div><div style="position:absolute;left:805.00px;top:217.69px;font-size:11px;line-height:11px;color:#000;white-space:nowrap;">0,7528</div><div style="position:absolute;left:805.00px;top:273.69px;font-size:11px;line-height:11px;color:#fff;white-space:nowrap;">0,7523</div><div style="position:absolute;left:805.00px;top:329.69px;font-size:11px;line-height:11px;color:#000;white-space:nowrap;">0,7518</div><div style="position:absolute;left:805.00px;top:440.49px;font-size:11px;line-height:11px;color:#000;white-space:nowrap;">0,7508</div><div style="position:absolute;left:805.50px;top:618.19px;font-size:11px;line-height:11px;color:#000;white-space:nowrap;">702</div><div style="position:absolute;left:805.00px;top:656.69px;font-size:11px;line-height:11px;color:#000;white-space:nowrap;">-149,12</div><div style="position:absolute;left:5.00px;top:548.99px;font-size:11px;line-height:11px;color:#000;white-space:nowrap;letter-spacing:0.08px;">VolumeUpDown(6A 06-18 (15 Min))</div><svg width="1187" height="731" viewBox="0 0 1187 731"><rect x="8.7" y="602.9" width="25" height="51.1" fill="#00bfff"/><rect x="56.7" y="609.8" width="25" height="44.2" fill="#00bfff"/><rect x="104.7" y="609" width="25" height="45.0" fill="#00bfff"/><rect x="152.7" y="614" width="25" height="40.0" fill="#00bfff"/><rect x="200.7" y="569" width="25" height="85.0" fill="#00bfff"/><rect x="248.7" y="547.8" width="25" height="106.2" fill="#00bfff"/><rect x="296.7" y="550.9" width="25" height="103.1" fill="#00bfff"/><rect x="344.7" y="573.9" width="25" height="80.1" fill="#00bfff"/><rect x="392.7" y="606.8" width="25" height="47.2" fill="#00bfff"/><rect x="440.7" y="614.9" width="25" height="39.1" fill="#00bfff"/><rect x="488.7" y="630.9" width="25" height="23.1" fill="#00bfff"/><rect x="536.7" y="622.9" width="25" height="31.1" fill="#00bfff"/><line x1="3" y1="654.5" x2="796.8" y2="654.5" stroke="#b4b4b4" stroke-width="1"/><line x1="3" y1="662" x2="796.8" y2="662" stroke="#000" stroke-width="2.2"/><line x1="69.4" y1="661" x2="69.4" y2="668" stroke="#000" stroke-width="1.4"/><line x1="165.4" y1="661" x2="165.4" y2="668" stroke="#000" stroke-width="1.4"/><line x1="261.4" y1="661" x2="261.4" y2="668" stroke="#000" stroke-width="1.4"/><line x1="357.4" y1="661" x2="357.4" y2="668" stroke="#000" stroke-width="1.4"/><line x1="453.4" y1="661" x2="453.4" y2="668" stroke="#000" stroke-width="1.4"/><line x1="549.4" y1="661" x2="549.4" y2="668" stroke="#000" stroke-width="1.4"/><line x1="645.4" y1="661" x2="645.4" y2="668" stroke="#000" stroke-width="1.4"/><line x1="741.4" y1="661" x2="741.4" y2="668" stroke="#000" stroke-width="1.4"/></svg><div style="position:absolute;left:5.00px;top:651.29px;font-size:11px;line-height:11px;color:#000;white-space:nowrap;letter-spacing:0.12px;">© 2018 NinjaTrader, LLC</div><div style="position:absolute;left:69.40px;top:670.19px;font-size:11px;line-height:11px;color:#000;white-space:nowrap;transform:translateX(-50%);">10:30</div><div style="position:absolute;left:165.40px;top:670.19px;font-size:11px;line-height:11px;color:#000;white-space:nowrap;transform:translateX(-50%);">11:00</div><div style="position:absolute;left:261.40px;top:670.19px;font-size:11px;line-height:11px;color:#000;white-space:nowrap;transform:translateX(-50%);">11:30</div><div style="position:absolute;left:357.40px;top:670.19px;font-size:11px;line-height:11px;color:#000;white-space:nowrap;transform:translateX(-50%);">12:00</div><div style="position:absolute;left:453.40px;top:670.19px;font-size:11px;line-height:11px;color:#000;white-space:nowrap;transform:translateX(-50%);">12:30</div><div style="position:absolute;left:549.40px;top:670.19px;font-size:11px;line-height:11px;color:#000;white-space:nowrap;transform:translateX(-50%);">13:00</div><div style="position:absolute;left:645.40px;top:670.19px;font-size:11px;line-height:11px;color:#000;white-space:nowrap;transform:translateX(-50%);">13:30</div><div style="position:absolute;left:741.40px;top:670.19px;font-size:11px;line-height:11px;color:#000;white-space:nowrap;transform:translateX(-50%);">14:00</div><div style="position:absolute;left:641.00px;top:668.00px;width:30.60px;height:12.80px;background:#d4d4d4;"></div><div style="position:absolute;left:656.50px;top:670.19px;font-size:11px;line-height:11px;color:#000;white-space:nowrap;transform:translateX(-50%);">13:15</div><div style="position:absolute;left:2.00px;top:690.00px;width:848.00px;height:22.00px;background:#f0f0f0;"></div><div style="position:absolute;left:800.00px;top:690.00px;width:33.00px;height:22.00px;background:#cdcdcd;"></div><svg style="left:0;top:0" width="1187" height="731" viewBox="0 0 1187 731"><path d="M12.6 697.2L8 700.4L12.6 703.6" fill="none" stroke="#555" stroke-width="2"/><path d="M839.5 697.2L844.1 700.4L839.5 703.6" fill="none" stroke="#555" stroke-width="2"/><path d="M1165.5 676.4L1170.1 679.6L1165.5 682.8" fill="none" stroke="#555" stroke-width="2"/></svg><div style="position:absolute;left:9.20px;top:87.30px;width:123.60px;height:13.70px;background:#fff;border:1px solid #d8d8d8;"></div><div style="position:absolute;left:8.00px;top:90.00px;width:1.20px;height:8.50px;background:#f5c878;"></div><div style="position:absolute;left:13.00px;top:90.13px;font-size:9.3px;line-height:9.3px;color:#000;white-space:nowrap;">©2010 Final Market Balance</div><div style="position:absolute;left:136.00px;top:89.74px;font-size:10.7px;line-height:10.7px;color:#000;white-space:nowrap;">(6A 06-18 (15 Min),2,20)</div><div style="position:absolute;left:16.40px;top:115.20px;font-size:13px;line-height:13px;color:#7e0000;white-space:nowrap;letter-spacing:0.93px;">Зашел по ручной стратегии. Пока мониторил другие графики ситуация резко изменилась.</div><div style="position:absolute;left:16.40px;top:133.80px;font-size:13px;line-height:13px;color:#7e0000;white-space:nowrap;letter-spacing:0.93px;">Закрылся, чтобы не оказаться в минусе. Итог 20$</div><div style="position:absolute;left:850.00px;top:82.00px;width:166.50px;height:629.50px;background:#708090;border-left:1.6px solid #6a6a6a;border-top:1.5px solid #707070;"></div><div style="position:absolute;left:993.00px;top:86.00px;width:22.00px;height:20.60px;background:#e1e1e1;border:1px solid #c8c8c8;"></div><svg style="left:998px;top:91px" width="12" height="8" viewBox="0 0 12 8"><path d="M1 7H11L6 1Z" fill="#000"/></svg><div style="position:absolute;left:861.00px;top:117.20px;width:69.60px;height:37.60px;background:#f0fff0;border:3px solid #dedede;box-shadow:inset 0 0 0 0.6px #c8c8c8;"></div><div style="position:absolute;left:895.80px;top:124.19px;font-size:11px;line-height:11px;color:#000;white-space:nowrap;transform:translateX(-50%);">BUY</div><div style="position:absolute;left:895.80px;top:136.69px;font-size:11px;line-height:11px;color:#000;white-space:nowrap;transform:translateX(-50%);">MARKET</div><div style="position:absolute;left:941.00px;top:117.20px;width:69.40px;height:37.60px;background:#fff0f5;border:3px solid #dedede;box-shadow:inset 0 0 0 0.6px #c8c8c8;"></div><div style="position:absolute;left:975.70px;top:124.19px;font-size:11px;line-height:11px;color:#000;white-space:nowrap;transform:translateX(-50%);">SELL</div><div style="position:absolute;left:975.70px;top:136.69px;font-size:11px;line-height:11px;color:#000;white-space:nowrap;transform:translateX(-50%);">MARKET</div><div style="position:absolute;left:861.00px;top:165.00px;width:69.60px;height:37.60px;background:#f0fff0;border:3px solid #dedede;box-shadow:inset 0 0 0 0.6px #c8c8c8;"></div><div style="position:absolute;left:895.80px;top:178.49px;font-size:11px;line-height:11px;color:#000;white-space:nowrap;transform:translateX(-50%);">BUY ASK</div><div style="position:absolute;left:941.00px;top:165.00px;width:69.40px;height:37.60px;background:#fff0f5;border:3px solid #dedede;box-shadow:inset 0 0 0 0.6px #c8c8c8;"></div><div style="position:absolute;left:975.70px;top:178.49px;font-size:11px;line-height:11px;color:#000;white-space:nowrap;transform:translateX(-50%);">SELL ASK</div><div style="position:absolute;left:861.00px;top:213.00px;width:69.60px;height:37.60px;background:#f0fff0;border:3px solid #dedede;box-shadow:inset 0 0 0 0.6px #c8c8c8;"></div><div style="position:absolute;left:895.80px;top:226.49px;font-size:11px;line-height:11px;color:#000;white-space:nowrap;transform:translateX(-50%);">BUY BID</div><div style="position:absolute;left:941.00px;top:213.00px;width:69.40px;height:37.60px;background:#fff0f5;border:3px solid #dedede;box-shadow:inset 0 0 0 0.6px #c8c8c8;"></div><div style="position:absolute;left:975.70px;top:226.49px;font-size:11px;line-height:11px;color:#000;white-space:nowrap;transform:translateX(-50%);">SELL BID</div><div style="position:absolute;left:861.00px;top:261.30px;width:70.00px;height:37.70px;background:#faebd7;border:3px solid #dedede;box-shadow:inset 0 0 0 0.6px #c8c8c8;"></div><div style="position:absolute;left:896.00px;top:274.84px;font-size:11px;line-height:11px;color:#000;white-space:nowrap;transform:translateX(-50%);">REV</div><div style="position:absolute;left:941.00px;top:261.30px;width:69.70px;height:37.70px;background:#faebd7;border:3px solid #dedede;box-shadow:inset 0 0 0 0.6px #c8c8c8;"></div><div style="position:absolute;left:975.85px;top:274.84px;font-size:11px;line-height:11px;color:#000;white-space:nowrap;transform:translateX(-50%);">CLOSE</div><div style="position:absolute;left:860.50px;top:311.50px;width:151.00px;height:23.00px;background:#faebd7;border:1px solid #5a6470;"></div><div style="position:absolute;left:936.00px;top:311.50px;width:1.00px;height:23.00px;background:#5a6470;"></div><div style="position:absolute;left:898.00px;top:318.19px;font-size:11px;line-height:11px;color:#000;white-space:nowrap;transform:translateX(-50%);">FLAT</div><div style="position:absolute;left:974.00px;top:318.19px;font-size:11px;line-height:11px;color:#000;white-space:nowrap;transform:translateX(-50%);">ENTRY</div><div style="position:absolute;left:860.50px;top:334.50px;width:151.00px;height:24.00px;background:#000;border:1px solid #5a6470;"></div><div style="position:absolute;left:936.00px;top:341.69px;font-size:11px;line-height:11px;color:#fff;white-space:nowrap;transform:translateX(-50%);font-weight:bold;">PnL</div><div style="position:absolute;left:905.00px;top:371.69px;font-size:11px;line-height:11px;color:#000;white-space:nowrap;transform:translateX(-50%);">Account</div><div style="position:absolute;left:980.00px;top:371.69px;font-size:11px;line-height:11px;color:#000;white-space:nowrap;transform:translateX(-50%);">Qty</div><div style="position:absolute;left:859.70px;top:388.70px;width:90.30px;height:21.30px;background:#d4d4d4;border:1px solid #c4c4c4;"></div><div style="position:absolute;left:864.00px;top:394.19px;font-size:11px;line-height:11px;color:#7a7a7a;white-space:nowrap;">Sim101</div><svg style="left:935px;top:396px" width="10" height="6" viewBox="0 0 10 6"><path d="M1 1L5 5L9 1" fill="none" stroke="#a0a0a0" stroke-width="1"/></svg><div style="position:absolute;left:956.00px;top:389.40px;width:55.40px;height:19.60px;background:#fff;border:1px solid #a0a0a0;"></div><div style="position:absolute;left:959.00px;top:394.19px;font-size:11px;line-height:11px;color:#000;white-space:nowrap;">1</div><div style="position:absolute;left:996.00px;top:391.00px;width:13.50px;height:16.50px;background:#f0f0f0;border:1px solid #c8c8c8;"></div><svg style="left:998px;top:392px" width="10" height="15" viewBox="0 0 10 15"><path d="M2 5.5H8L5 2.5Z M2 9.5H8L5 12.5Z" fill="#000"/><path d="M1 7.5H9" stroke="#a0a0a0" stroke-width="1"/></svg><div style="position:absolute;left:907.80px;top:425.69px;font-size:11px;line-height:11px;color:#000;white-space:nowrap;transform:translateX(-50%);">ATM Strategy</div><div style="position:absolute;left:983.50px;top:422.00px;width:27.20px;height:17.30px;background:#6f7f8f;border:2px solid #dcdcdc;"></div><div style="position:absolute;left:997.00px;top:424.69px;font-size:11px;line-height:11px;color:#000;white-space:nowrap;transform:translateX(-50%);">...</div><div style="position:absolute;left:860.00px;top:443.50px;width:151.40px;height:20.70px;background:#e5e5e5;border:1px solid #c8c8c8;"></div><div style="position:absolute;left:864.00px;top:448.69px;font-size:11px;line-height:11px;color:#000;white-space:nowrap;">&lt;None&gt;</div><svg style="left:997px;top:450px" width="11" height="7" viewBox="0 0 11 7"><path d="M1 1L5.5 5.5L10 1" fill="none" stroke="#404040" stroke-width="1.1"/></svg><div style="position:absolute;left:880.50px;top:477.69px;font-size:11px;line-height:11px;color:#000;white-space:nowrap;">A: 0,7523</div><div style="position:absolute;left:961.00px;top:477.69px;font-size:11px;line-height:11px;color:#000;white-space:nowrap;">29</div><div style="position:absolute;left:880.50px;top:499.69px;font-size:11px;line-height:11px;color:#000;white-space:nowrap;">B: 0,7522</div><div style="position:absolute;left:961.00px;top:499.69px;font-size:11px;line-height:11px;color:#000;white-space:nowrap;">66</div></body></html>
